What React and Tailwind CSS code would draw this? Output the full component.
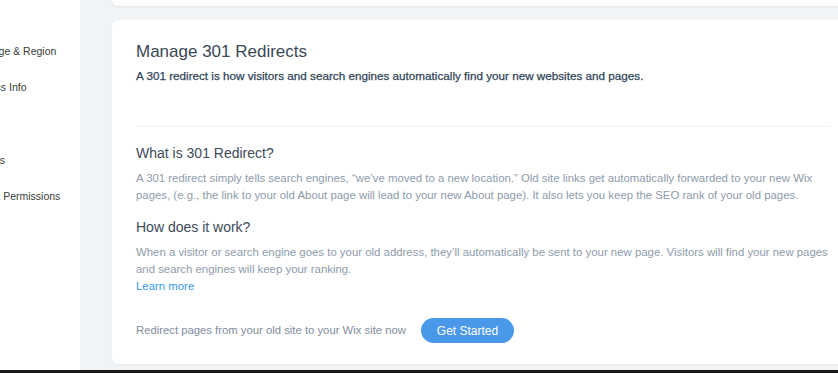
import React from 'react';

const sideItems = ['Language & Region', 'Business Info', 'SEO', 'Domains', 'Roles & Permissions'];

function Sidebar() {
  return (
    <aside className="w-[80px] shrink-0 bg-white overflow-hidden">
      <ul className="ml-[-36.5px] pt-[43px] flex flex-col gap-[20.25px] text-[10.5px] leading-[16px] text-[#3a3a3a] whitespace-nowrap">
        {sideItems.map((item) => (
          <li key={item}>{item}</li>
        ))}
      </ul>
    </aside>
  );
}

function RedirectCard() {
  return (
    <section className="w-[742px] bg-white rounded-md shadow-[0_1px_2px_rgba(0,0,0,0.06)] px-6 pt-[21px] pb-[21px]">
      <h1 className="text-[17px] leading-[22px] font-light text-[#3a4756]">Manage 301 Redirects</h1>
      <p className="mt-[5px] text-[11.7px] leading-[16px] text-[#2f4358] [-webkit-text-stroke:0.25px_#2f4358]">
        A 301 redirect is how visitors and search engines automatically find your new websites and pages.
      </p>

      <div className="mt-[42px] border-t border-[#eef1f4]" />

      <h2 className="mt-[17px] text-[14px] leading-[18px] text-[#3e4a58]">What is 301 Redirect?</h2>
      <p className="mt-[8px] text-[11.4px] leading-[17px] text-[#8d9bab]">
        A 301 redirect simply tells search engines, “we’ve moved to a new location.” Old site links get automatically forwarded to your new Wix pages, (e.g., the link to your old About page will lead to your new About page). It also lets you keep the SEO rank of your old pages.
      </p>

      <h2 className="mt-[14px] text-[14px] leading-[18px] text-[#3e4a58]">How does it work?</h2>
      <p className="mt-[8px] text-[11.4px] leading-[17px] text-[#8d9bab]">
        When a visitor or search engine goes to your old address, they’ll automatically be sent to your new page. Visitors will find your new pages and search engines will keep your ranking.
      </p>
      <a href="#" className="block text-[11.4px] leading-[16px] text-[#3899ec]">Learn more</a>

      <div className="mt-[24px] flex items-center gap-[15px]">
        <span className="text-[11.3px] text-[#7f8e9d]">Redirect pages from your old site to your Wix site now</span>
        <button className="h-[25px] w-[93px] rounded-full bg-[#4a98ea] text-white text-[12px]">Get Started</button>
      </div>
    </section>
  );
}

export default function App() {
  return (
    <div className="h-screen w-full flex flex-col overflow-hidden font-['Liberation_Sans',Arial,sans-serif]">
      <div className="flex flex-1 min-h-0">
        <Sidebar />
        <main className="flex-1 bg-[#f0f4f7] pl-[32px] overflow-hidden">
          <div className="w-[742px] h-[6px] bg-white rounded-b-md shadow-[0_1px_2px_rgba(0,0,0,0.06)]" />
          <div className="mt-[14px]">
            <RedirectCard />
          </div>
        </main>
      </div>
      <div className="h-[3px] bg-[#1b1b1b]" />
    </div>
  );
}
